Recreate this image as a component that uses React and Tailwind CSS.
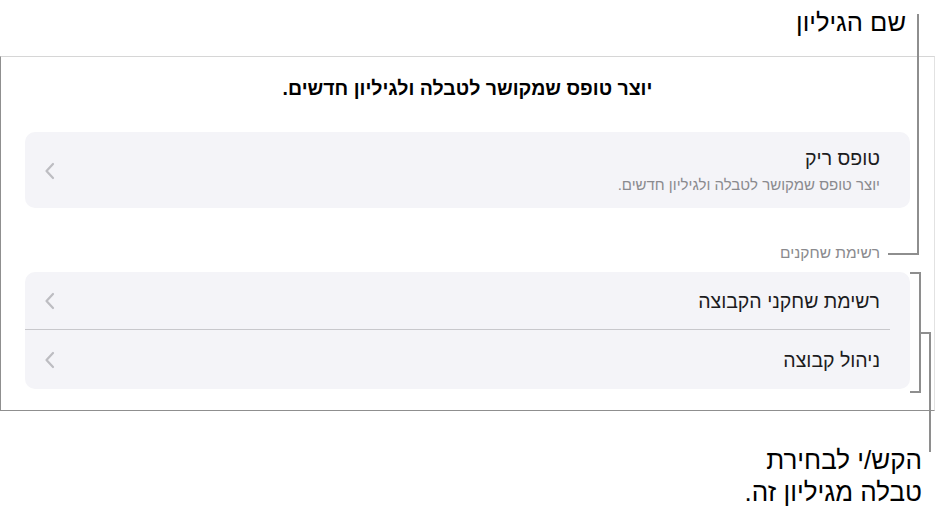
const font = { fontFamily: '"Liberation Sans", Arial, sans-serif' }

function Chevron() {
  return (
    <svg width="11" height="18" viewBox="0 0 11 18" className="shrink-0">
      <path d="M9 2 L2.5 9 L9 16" stroke="#bdbdc2" strokeWidth="2.2" fill="none" strokeLinecap="round" strokeLinejoin="round" />
    </svg>
  )
}

function Row({ title, sub }) {
  return (
    <div className="flex items-center justify-between">
      <div>
        <div className="text-[19.5px] leading-[22px] text-[#1c1c1e]">{title}</div>
        {sub && <div className="mt-[7px] text-[15px] leading-[18px] text-[#8a8a8e]">{sub}</div>}
      </div>
      <Chevron />
    </div>
  )
}

export default function App() {
  return (
    <div className="relative w-[935px] h-[513px] bg-white overflow-hidden" style={font}>
      {/* top callout label */}
      <div dir="rtl" className="h-[56px] pr-[29px] pt-[8px] text-[25.5px] leading-[28px] text-black">
        שם הגיליון
      </div>

      {/* sheet panel */}
      <div dir="rtl" className="border-t border-t-[#d6d6d6] border-l border-l-[#8f8f8f] border-b border-b-[#8f8f8f] border-r border-r-[#e2e2e2] px-6 pt-[19px] pb-[21px]">
        <div className="text-center text-[19.5px] leading-[24px] font-bold text-black">
          יוצר טופס שמקושר לטבלה ולגיליון חדשים.
        </div>

        <div className="mt-[32px] rounded-[10px] bg-[#f4f4f8] pr-[30px] pl-[19px] pt-[15px] pb-[14px]">
          <Row title="טופס ריק" sub="יוצר טופס שמקושר לטבלה ולגיליון חדשים." />
        </div>

        <div className="mt-[36px] pr-[30px] text-[15.5px] leading-[18px] text-[#8a8a8e]">רשימת שחקנים</div>

        <div className="mt-[10px] rounded-[10px] bg-[#f4f4f8]">
          <div className="mr-[20px] pr-[10px] pl-[19px] h-[58px] flex flex-col justify-center border-b border-[#c8c8cc]">
            <Row title="רשימת שחקני הקבוצה" />
          </div>
          <div className="pr-[30px] pl-[19px] h-[59px] flex flex-col justify-center">
            <Row title="ניהול קבוצה" />
          </div>
        </div>
      </div>

      {/* bottom callout label */}
      <div dir="rtl" className="pr-[13px] pt-[33px] text-[26px] leading-[32px] text-black">
        <div>הקש/י לבחירת</div>
        <div>טבלה מגיליון זה.</div>
      </div>

      {/* callout lines */}
      <div className="absolute left-[917px] top-[14px] w-[2px] h-[241px] bg-[#8e8e8e]" />
      <div className="absolute left-[888px] top-[253px] w-[30px] h-[2px] bg-[#8e8e8e]" />

      <div className="absolute left-[919px] top-[272px] w-[2px] h-[121px] bg-[#8e8e8e]" />
      <div className="absolute left-[910px] top-[272px] w-[10px] h-[2px] bg-[#8e8e8e]" />
      <div className="absolute left-[910px] top-[391px] w-[10px] h-[2px] bg-[#8e8e8e]" />
      <div className="absolute left-[920px] top-[332px] w-[11px] h-[2px] bg-[#8e8e8e]" />
      <div className="absolute left-[929px] top-[332px] w-[2px] h-[120px] bg-[#8e8e8e]" />
    </div>
  )
}
